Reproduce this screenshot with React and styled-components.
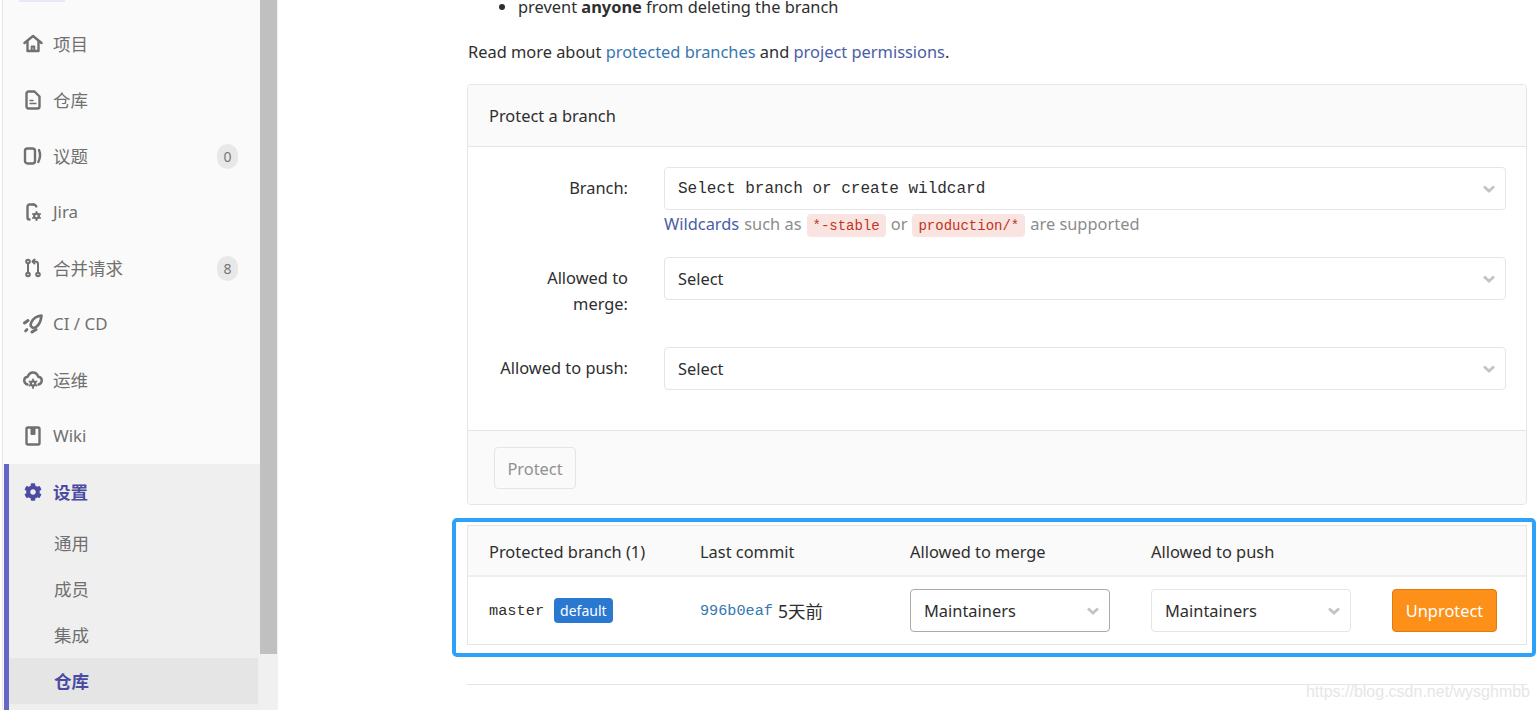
import React from 'react';
import styled, { createGlobalStyle } from 'styled-components';
import { FaCog } from 'react-icons/fa';

const GlobalStyle = createGlobalStyle`
  html, body {
    margin: 0;
    height: 100%;
    overflow: hidden;
    background: #fff;
  }
  body {
    font-family: "Noto Sans", "Noto Sans CJK SC", sans-serif;
    font-size: 16.4px;
    color: #2e2e2e;
  }
`;

const mono = '"Liberation Mono", "DejaVu Sans Mono", monospace';

const Page = styled.div`
  position: relative;
  display: flex;
  height: 710px;
  overflow: hidden;
`;

const Sidebar = styled.aside`
  flex: 0 0 257px;
  margin-left: 2px;
  border-left: 1px solid #e5e5e5;
  background: #fafafa;
`;

const TopStub = styled.div`
  width: 46px;
  height: 2px;
  margin: 0 0 14px 16px;
  background: #e8e8f8;
`;

const NavRow = styled.div`
  display: flex;
  align-items: center;
  height: 56px;
  padding: 0 22px 0 20px;
  color: ${({ $active }) => ($active ? '#4b4ba3' : '#707070')};
  font-weight: ${({ $active }) => ($active ? 700 : 400)};
`;

const IconBox = styled.span`
  display: flex;
  align-items: center;
  justify-content: center;
  flex: 0 0 20px;
  height: 20px;
  margin-right: 10px;
  svg {
    display: block;
  }
`;

const NavLabel = styled.span`
  flex: 1;
  margin-bottom: 2px;
  font-size: ${({ $latin }) => ($latin ? '16.9px' : '17.5px')};
`;

const Count = styled.span`
  display: flex;
  align-items: center;
  justify-content: center;
  width: 21px;
  height: 25px;
  border-radius: 12px;
  background: #e8e8e8;
  color: #777;
  font-size: 14px;
`;

const ActiveSection = styled.div`
  height: 300px;
  margin-left: 1px;
  border-left: 5px solid #6666c4;
  background: #efefef;
  ${NavRow} {
    padding-left: 14px;
  }
`;

const SubRow = styled.div`
  display: flex;
  align-items: center;
  height: 46px;
  margin-right: 2px;
  padding: 0 0 2px 45px;
  box-sizing: border-box;
  font-size: 17.5px;
  color: ${({ $active }) => ($active ? '#4b4ba3' : '#707070')};
  font-weight: ${({ $active }) => ($active ? 700 : 400)};
  background: ${({ $active }) => ($active ? '#e5e5e5' : 'transparent')};
`;

const ScrollTrack = styled.div`
  flex: 0 0 18px;
  background: #f0f0f0;
`;

const ScrollThumb = styled.div`
  width: 17px;
  height: 654px;
  background: #c0c0c0;
`;

const Main = styled.main`
  flex: 1;
  min-width: 0;
  padding: 0 11px 0 189px;
`;

const Bullets = styled.ul`
  margin: -5px 0 0;
  padding-left: 51px;
  line-height: 24px;
`;

const Paragraph = styled.p`
  margin: 21px 0 20px 1px;
  line-height: 24px;
`;

const TextLink = styled.span`
  color: ${({ $visited }) => ($visited ? '#4a5da8' : '#3777b0')};
`;

const Card = styled.section`
  border: 1px solid #e5e5e5;
  border-radius: 4px;
  overflow: hidden;
`;

const CardHeader = styled.div`
  display: flex;
  align-items: center;
  height: 61px;
  padding-left: 21px;
  border-bottom: 1px solid #e5e5e5;
  background: #fafafa;
`;

const Form = styled.div`
  display: flex;
  flex-direction: column;
  gap: 19px;
  padding: 20px 20px 40px 21px;
`;

const FormRow = styled.div`
  display: grid;
  grid-template-columns: 139px 1fr;
  column-gap: 36px;
  min-height: ${({ $tall }) => ($tall ? '71px' : '43px')};
`;

const FieldLabel = styled.label`
  padding: 8px 0 0 6px;
  text-align: right;
  line-height: 26px;
`;

const Select = styled.div`
  display: flex;
  align-items: center;
  justify-content: space-between;
  box-sizing: border-box;
  width: ${({ $width }) => $width || '100%'};
  height: 43px;
  padding: 0 10px 0 13px;
  border: 1px solid ${({ $focused }) => ($focused ? '#aaa' : '#e5e5e5')};
  border-radius: 4px;
  background: #fff;
  font-family: ${({ $mono }) => ($mono ? mono : 'inherit')};
  font-size: ${({ $mono }) => ($mono ? '16px' : 'inherit')};
  color: #2e2e2e;
`;

const Help = styled.div`
  display: flex;
  align-items: center;
  gap: 5px;
  box-sizing: border-box;
  height: 28px;
  padding-bottom: 2px;
  color: #8c8c8c;
`;

const InlineCode = styled.code`
  margin-top: 4px;
  padding: 3px 6px 1px;
  border-radius: 4px;
  background: #f9e4e1;
  color: #c0341d;
  font-family: ${mono};
  font-size: 14px;
  line-height: 19px;
`;

const CardFooter = styled.div`
  padding: 16px 26px 15px;
  border-top: 1px solid #e5e5e5;
  background: #fafafa;
`;

const DisabledButton = styled.div`
  display: flex;
  align-items: center;
  justify-content: center;
  box-sizing: border-box;
  width: 82px;
  height: 42px;
  border: 1px solid #e5e5e5;
  border-radius: 4px;
  color: #919191;
`;

const Highlight = styled.div`
  margin: 13px -9px 0 -15px;
  padding: 3px 5px 8px 11px;
  border: 4px solid #2ea1f8;
  border-radius: 5px;
`;

const Table = styled.div`
  border: 1px solid #e5e5e5;
`;

const Columns = styled.div`
  display: grid;
  grid-template-columns: 211px 210px 241px 241px 1fr;
  align-items: center;
  padding-left: 21px;
`;

const TableHead = styled(Columns)`
  height: 47px;
  padding-top: 2px;
  border-bottom: 2px solid #eee;
  background: #fafafa;
`;

const TableRow = styled(Columns)`
  height: 67px;
`;

const Cell = styled.div`
  display: flex;
  align-items: center;
`;

const BranchName = styled.span`
  font-family: ${mono};
  font-size: 15.3px;
`;

const DefaultBadge = styled.span`
  margin-left: 10px;
  padding: 2px 6px;
  border-radius: 4px;
  background: #2a78d0;
  color: #fff;
  font-size: 14px;
  line-height: 21px;
`;

const CommitSha = styled.span`
  margin-right: 5px;
  color: #3777b0;
  font-family: ${mono};
  font-size: 15.2px;
`;

const CommitAge = styled.span`
  font-size: 17.5px;
`;

const OrangeButton = styled.div`
  display: flex;
  align-items: center;
  justify-content: center;
  box-sizing: border-box;
  width: 105px;
  height: 43px;
  border: 1px solid #e07b10;
  border-radius: 4px;
  background: #fc9019;
  color: #fff;
`;

const Divider = styled.hr`
  margin: 27px 0 0;
  border: 0;
  border-top: 1px solid #e5e5e5;
`;

const Watermark = styled.span`
  position: absolute;
  right: 8px;
  bottom: 9px;
  color: #e6e6e6;
  font-family: "Liberation Sans", sans-serif;
  font-size: 16px;
`;

const Icon = ({ children, color = '#707070', width = 2.4 }) => (
  <svg width="20" height="20" viewBox="0 0 20 20" fill="none" stroke={color} strokeWidth={width} strokeLinecap="round" strokeLinejoin="round">
    {children}
  </svg>
);

const HomeIcon = () => (
  <Icon>
    <path d="M1.500 9 10 2l8.500 7" />
    <path d="M4.500 8v9h11V8" />
    <path d="M8.700 17v-4.500h2.600V17" strokeWidth="2" />
  </Icon>
);

const DocIcon = () => (
  <Icon>
    <path d="M5.500 1.500h6L16.500 6.500v10a2 2 0 0 1-2 2h-9a2 2 0 0 1-2-2v-13a2 2 0 0 1 2-2z" />
    <path d="M7 10.500h3M7 13.500h6" strokeWidth="1.300" />
  </Icon>
);

const IssuesIcon = () => (
  <Icon>
    <rect x="2" y="2.500" width="10" height="15" rx="2.500" />
    <path d="M16 4c1.500 3.500 1.300 8-.7 12" />
  </Icon>
);

const JiraIcon = () => (
  <Icon>
    <path d="M10.500 2.500H6.500a2 2 0 0 0-2 2v11a2 2 0 0 0 2 2" />
    <path d="M10.500 2.500c1.500 0 2.300.8 2.800 2" />
    <circle cx="13.500" cy="14" r="2.300" strokeWidth="2.200" />
    <path d="M13.500 9.800v1.400M13.500 16.800v1.400M9.900 12l1.200.7M15.900 15.300l1.200.7M9.900 16l1.200-.7M15.900 12.700l1.200-.7" strokeWidth="1.800" />
  </Icon>
);

const MergeIcon = () => (
  <Icon width={2}>
    <circle cx="5" cy="3.500" r="1.800" />
    <circle cx="5" cy="16.500" r="1.800" />
    <circle cx="15" cy="16.500" r="1.800" />
    <path d="M5 5.500v9" />
    <path d="M15 14.500V6a2.500 2.500 0 0 0-2.500-2.500H10" />
    <path d="M11.500 1.500 9.500 3.500l2 2" />
  </Icon>
);

const RocketIcon = () => (
  <Icon width={2.600}>
    <path d="M18.500 1.500c-4.500.5-8 2.500-10 6.500-.6 1.300-.9 2.800-.8 3.800l2 2c1.200 0 2.400-.4 3.500-1 3.200-2 4.800-6.500 5.300-11.300z" />
    <path d="M5 6.500 1.500 9" strokeWidth="3" />
    <path d="M13 15.500l-4 2.500" strokeWidth="3" />
    <path d="M4 15.500l-1.500 1.500" strokeWidth="2.600" />
  </Icon>
);

const CloudIcon = () => (
  <Icon>
    <path d="M4.500 14.500C2.500 14 1.200 12.500 1.200 10.500c0-2 1.600-3.500 3.500-3.700C5.700 4 7.500 2.500 10 2.500s4.300 1.500 5.300 4.300c1.900.2 3.500 1.700 3.500 3.700 0 2-1.300 3.500-3.300 4" />
    <circle cx="10" cy="13.500" r="2.200" strokeWidth="2.200" />
    <path d="M10 9.500v1M10 16.500v1.500M6.500 11.500l1 .5M12.500 15l1 .5M6.500 15.500l1-.5M12.500 12l1-.5" strokeWidth="1.800" />
  </Icon>
);

const BookIcon = () => (
  <Icon>
    <rect x="3.500" y="1.500" width="13" height="17" rx="1.500" />
    <path d="M8 2v6.500h4V2" fill="#707070" strokeWidth="1" />
  </Icon>
);

const Chevron = () => (
  <svg width="12" height="8" viewBox="0 0 12 8" fill="none" stroke="#c4c4c4" strokeWidth="2.800">
    <path d="M1 1.500 6 6l5-4.500" />
  </svg>
);

const NAV = [
  { label: '项目', icon: <HomeIcon /> },
  { label: '仓库', icon: <DocIcon /> },
  { label: '议题', icon: <IssuesIcon />, count: 0 },
  { label: 'Jira', icon: <JiraIcon />, latin: true },
  { label: '合并请求', icon: <MergeIcon />, count: 8 },
  { label: 'CI / CD', icon: <RocketIcon />, latin: true },
  { label: '运维', icon: <CloudIcon /> },
  { label: 'Wiki', icon: <BookIcon />, latin: true },
];

const SETTINGS = [
  { label: '通用' },
  { label: '成员' },
  { label: '集成' },
  { label: '仓库', active: true },
];

const App = () => (
  <Page>
    <GlobalStyle />
    <Sidebar>
      <TopStub />
      {NAV.map(({ label, icon, count, latin }) => (
        <NavRow key={label}>
          <IconBox>{icon}</IconBox>
          <NavLabel $latin={latin}>{label}</NavLabel>
          {count !== undefined && <Count>{count}</Count>}
        </NavRow>
      ))}
      <ActiveSection>
        <NavRow $active>
          <IconBox>
            <FaCog size={18} color="#4b4ba3" />
          </IconBox>
          <NavLabel>设置</NavLabel>
        </NavRow>
        {SETTINGS.map(({ label, active }) => (
          <SubRow key={label} $active={active}>
            {label}
          </SubRow>
        ))}
      </ActiveSection>
    </Sidebar>
    <ScrollTrack>
      <ScrollThumb />
    </ScrollTrack>
    <Main>
      <Bullets>
        <li>
          prevent <strong>anyone</strong> from deleting the branch
        </li>
      </Bullets>
      <Paragraph>
        Read more about <TextLink>protected branches</TextLink> and{' '}
        <TextLink $visited>project permissions</TextLink>.
      </Paragraph>
      <Card>
        <CardHeader>Protect a branch</CardHeader>
        <Form>
          <FormRow>
            <FieldLabel>Branch:</FieldLabel>
            <div>
              <Select $mono>
                Select branch or create wildcard
                <Chevron />
              </Select>
              <Help>
                <TextLink $visited>Wildcards</TextLink> such as <InlineCode>*-stable</InlineCode> or{' '}
                <InlineCode>production/*</InlineCode> are supported
              </Help>
            </div>
          </FormRow>
          <FormRow $tall>
            <FieldLabel>Allowed to merge:</FieldLabel>
            <Select>
              Select
              <Chevron />
            </Select>
          </FormRow>
          <FormRow>
            <FieldLabel>Allowed to push:</FieldLabel>
            <Select>
              Select
              <Chevron />
            </Select>
          </FormRow>
        </Form>
        <CardFooter>
          <DisabledButton>Protect</DisabledButton>
        </CardFooter>
      </Card>
      <Highlight>
        <Table>
          <TableHead>
            <Cell>Protected branch (1)</Cell>
            <Cell>Last commit</Cell>
            <Cell>Allowed to merge</Cell>
            <Cell>Allowed to push</Cell>
          </TableHead>
          <TableRow>
            <Cell>
              <BranchName>master</BranchName>
              <DefaultBadge>default</DefaultBadge>
            </Cell>
            <Cell>
              <CommitSha>996b0eaf</CommitSha>
              <CommitAge>5天前</CommitAge>
            </Cell>
            <Cell>
              <Select $width="200px" $focused>
                Maintainers
                <Chevron />
              </Select>
            </Cell>
            <Cell>
              <Select $width="200px">
                Maintainers
                <Chevron />
              </Select>
            </Cell>
            <Cell>
              <OrangeButton>Unprotect</OrangeButton>
            </Cell>
          </TableRow>
        </Table>
      </Highlight>
      <Divider />
    </Main>
    <Watermark>https://blog.csdn.net/wysghmbb</Watermark>
  </Page>
);

export default App;
